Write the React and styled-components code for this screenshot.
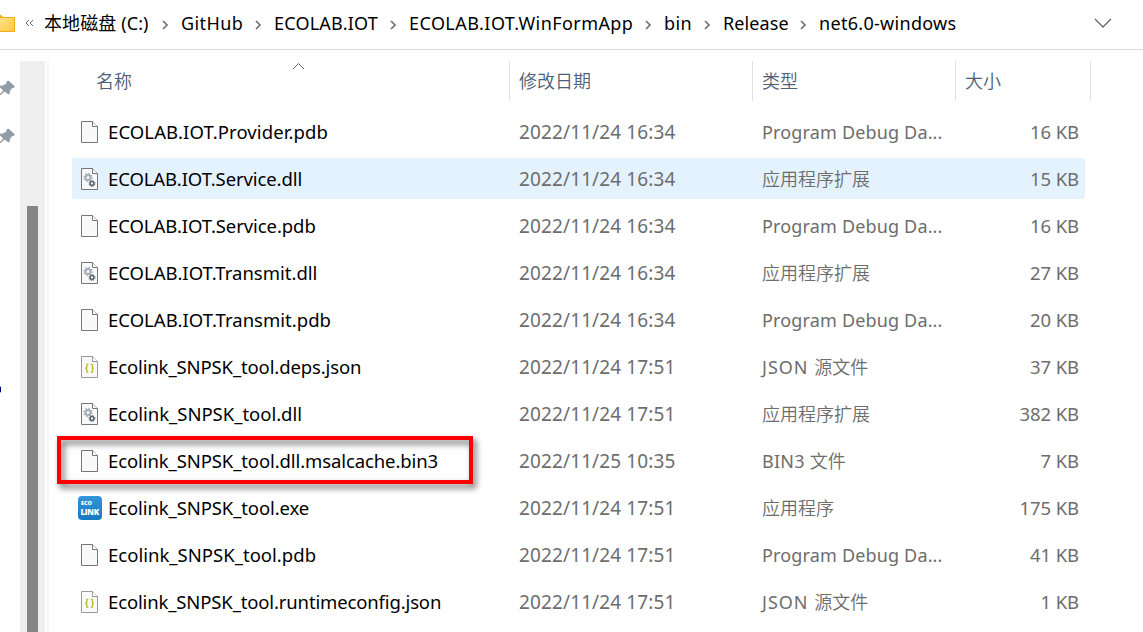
import React from "react";
import styled, { createGlobalStyle } from "styled-components";

const Global = createGlobalStyle`
  * { box-sizing: border-box; }
  body {
    margin: 0;
    background: #fff;
    color: #000;
    font-family: "Noto Sans", "Noto Sans CJK SC", sans-serif;
    font-size: 18px;
    overflow: hidden;
  }
`;

const Explorer = styled.div`
  display: flex;
  flex-direction: column;
  width: 1143px;
  height: 632px;
  overflow: hidden;
`;

const AddressBar = styled.header`
  display: flex;
  align-items: center;
  flex: none;
  height: 50px;
  padding: 0 31px 4px 0;
  border-bottom: 1px solid #d9d9d9;
`;

const FolderIcon = styled.svg`
  flex: none;
  margin-right: 10px;
`;

const Overflow = styled.svg`
  flex: none;
  margin-right: 10px;
`;

const Crumb = styled.span`
  flex: none;
  width: ${(p) => p.$w}px;
  white-space: nowrap;
  letter-spacing: ${(p) => p.$ls || 0}px;
  line-height: 26px;
`;

const CrumbArrow = styled.svg`
  flex: none;
  margin: 4px 12px 0 12px;
`;

const Expand = styled.svg`
  margin-left: auto;
`;

const Body = styled.div`
  display: flex;
  flex: 1;
  min-height: 0;
  padding-top: 11px;
`;

const NavPane = styled.aside`
  display: flex;
  flex-direction: column;
  flex: none;
  width: 20px;
  padding-top: 19px;
  gap: 32px;
`;

const NavLabelEnd = styled.i`
  width: 1px;
  height: 5px;
  margin-top: 211px;
  background: #00007a;
  box-shadow: 0 -1px 0 #8ecbff, 0 1px 0 #8ecbff;
`;

const ScrollTrack = styled.div`
  flex: none;
  width: 25px;
  padding: 145px 7px 0;
  background: #efefef;
`;

const ScrollThumb = styled.div`
  height: 100%;
  background: #858585;
`;

const PaneEdge = styled.div`
  flex: none;
  width: 4px;
  border-right: 2px solid #f5f5f5;
`;

const FileList = styled.main`
  flex: 1;
  padding-left: 23px;
`;

const HeaderRow = styled.div`
  display: grid;
  grid-template-columns: 438px 243px 203px 135px;
  height: 40px;
  margin-bottom: 10px;
`;

const HeaderCell = styled.div`
  position: relative;
  height: 40px;
  padding-left: ${(p) => p.$pad || 9}px;
  border-right: 1px solid #e2e2e2;
  color: #4c607a;
  font-weight: 350;
  line-height: 41px;
`;

const SortMark = styled.svg`
  position: absolute;
  left: 220px;
  top: 1px;
`;

const Rows = styled.div`
  display: flex;
  flex-direction: column;
  gap: 6px;
`;

const Row = styled.div`
  position: relative;
  display: grid;
  grid-template-columns: 437px 243px 203px 130px;
  width: 1013px;
  height: 41px;
  border-radius: 2px;
  line-height: 42px;
  background: ${(p) => (p.$hover ? "#e4f2fe" : "transparent")};
`;

const NameCell = styled.div`
  display: flex;
  align-items: center;
  height: 41px;
  padding-left: 5px;
  gap: 5px;
  white-space: nowrap;
  font-size: 18.5px;
  letter-spacing: ${(p) => p.$ls || 0}px;
`;

const Cell = styled.div`
  height: 41px;
  padding-left: 10px;
  color: #6d6d6d;
  white-space: nowrap;
  letter-spacing: ${(p) => p.$ls || 0}px;
`;

const DateCell = styled(Cell)`
  font-size: 19px;
`;

const TypeCell = styled(Cell)`
  line-height: 43px;
`;

const Han = styled.span`
  font-weight: 350;
  letter-spacing: 0;
`;

const SizeCell = styled(Cell)`
  padding: 0 6px 0 0;
  font-size: 18.5px;
  text-align: right;
`;

const Label = styled.span`
  padding-top: 1px;
`;

const Highlight = styled.div`
  position: absolute;
  left: -15px;
  top: -4px;
  width: 416px;
  height: 48px;
  border: 4px solid #fe0000;
  filter: drop-shadow(3px 4px 3px rgba(0, 0, 0, 0.6));
`;

const IconSlot = styled.svg`
  flex: none;
`;

function Page({ light }) {
  const c = light ? "#999" : "#767676";
  return (
    <>
      <path d="M4.5 2.5H15.5L20.5 7.5V23.5H4.5Z" fill="#f9f9f9" stroke={c} />
      <path d="M15.5 2.5V7.5H20.5" fill="#fff" stroke={c} />
    </>
  );
}

function FileIcon({ kind }) {
  if (kind === "exe") {
    return (
      <IconSlot width="26" height="26" viewBox="0 0 26 26">
        <defs>
          <linearGradient id="app" x1="0" y1="0" x2="0" y2="1">
            <stop offset="0" stopColor="#3396d8" />
            <stop offset="1" stopColor="#1678c0" />
          </linearGradient>
        </defs>
        <rect x="1" y="1" width="24" height="24" rx="4" fill="url(#app)" />
        <text fill="#fff" fontFamily="Open Sans, sans-serif" fontWeight="800" letterSpacing="0">
          <tspan x="4" y="10.3" fontSize="5.5">ECO</tspan>
          <tspan x="3.5" y="19.7" fontSize="8" letterSpacing="-0.3">LINK</tspan>
        </text>
      </IconSlot>
    );
  }
  return (
    <IconSlot width="26" height="26" viewBox="0 0 26 26">
      <Page light={kind === "json"} />
      {kind === "dll" && (
        <g fill="none">
          <circle cx="11" cy="11.5" r="2.5" stroke="#a3adb8" strokeWidth="2" />
          <circle cx="11" cy="11.5" r="4" stroke="#a3adb8" strokeWidth="1.4" strokeDasharray="1.5 1.64" />
          <circle cx="15" cy="17.5" r="1.9" stroke="#5c6672" strokeWidth="1.5" />
          <circle cx="15" cy="17.5" r="3" stroke="#5c6672" strokeWidth="1" strokeDasharray="1.2 1.16" />
        </g>
      )}
      {kind === "json" && (
        <g fill="none" stroke="#c0bd35" strokeWidth="1.4">
          <path d="M11.3 10.2H10.6Q9.8 10.2 9.8 11V13Q9.8 14 8.4 14.2Q9.8 14.4 9.8 15.4V17.4Q9.8 18.2 10.6 18.2H11.3" />
          <path d="M13.9 10.2H14.6Q15.4 10.2 15.4 11V13Q15.4 14 16.8 14.2Q15.4 14.4 15.4 15.4V17.4Q15.4 18.2 14.6 18.2H13.9" />
        </g>
      )}
    </IconSlot>
  );
}

function Pin() {
  return (
    <svg width="16" height="16" viewBox="0 0 16 16">
      <path d="M8.3 0.5L14.8 6.2L13.6 8L11.5 8.5L9.8 11.6L9.7 14L8 14.2L4.7 11.4L0 15.6V14L3.2 10.2L0 7.6V5.8L3 5.4L6.2 3.6L6.8 1.2Z" fill="#929da6" />
    </svg>
  );
}

const crumbs = [
  { text: "本地磁盘 (C:)", w: 106, ls: 0.1 },
  { text: "GitHub", w: 62, ls: 0.4 },
  { text: "ECOLAB.IOT", w: 104, ls: 0.2 },
  { text: "ECOLAB.IOT.WinFormApp", w: 224, ls: 0.43 },
  { text: "bin", w: 28, ls: 0.4 },
  { text: "Release", w: 65, ls: 0.1 },
  { text: "net6.0-windows", w: 138, ls: 0.3 },
];

const PDB = { latin: "Program Debug Da...", ls: 0.16 };
const DLL = { han: "应用程序扩展" };
const EXE = { han: "应用程序" };
const JSON_FILE = { latin: "JSON ", han: "源文件", ls: 1 };
const BIN = { latin: "BIN3 ", han: "文件", ls: 0.25 };

const files = [
  { name: "ECOLAB.IOT.Provider.pdb", ls: 0.1, date: "2022/11/24 16:34", type: PDB, size: "16 KB", kind: "page" },
  { name: "ECOLAB.IOT.Service.dll", ls: -0.1, date: "2022/11/24 16:34", type: DLL, size: "15 KB", kind: "dll", hover: true },
  { name: "ECOLAB.IOT.Service.pdb", ls: -0.08, date: "2022/11/24 16:34", type: PDB, size: "16 KB", kind: "page" },
  { name: "ECOLAB.IOT.Transmit.dll", ls: 0, date: "2022/11/24 16:34", type: DLL, size: "27 KB", kind: "dll" },
  { name: "ECOLAB.IOT.Transmit.pdb", ls: 0.02, date: "2022/11/24 16:34", type: PDB, size: "20 KB", kind: "page" },
  { name: "Ecolink_SNPSK_tool.deps.json", ls: -0.12, date: "2022/11/24 17:51", type: JSON_FILE, size: "37 KB", kind: "json" },
  { name: "Ecolink_SNPSK_tool.dll", ls: -0.02, date: "2022/11/24 17:51", type: DLL, size: "382 KB", kind: "dll" },
  { name: "Ecolink_SNPSK_tool.dll.msalcache.bin3", ls: -0.1, date: "2022/11/25 10:35", type: BIN, size: "7 KB", kind: "page", marked: true },
  { name: "Ecolink_SNPSK_tool.exe", ls: -0.1, date: "2022/11/24 17:51", type: EXE, size: "175 KB", kind: "exe" },
  { name: "Ecolink_SNPSK_tool.pdb", ls: 0.02, date: "2022/11/24 17:51", type: PDB, size: "41 KB", kind: "page" },
  { name: "Ecolink_SNPSK_tool.runtimeconfig.json", ls: -0.14, date: "2022/11/24 17:51", type: JSON_FILE, size: "1 KB", kind: "json" },
];

export default function App() {
  return (
    <Explorer>
      <Global />
      <AddressBar>
        <FolderIcon width="15" height="18" viewBox="0 0 15 18">
          <defs>
            <linearGradient id="folder" x1="0" y1="0" x2="1" y2="1">
              <stop offset="0" stopColor="#ffe08a" />
              <stop offset="1" stopColor="#fdc93f" />
            </linearGradient>
          </defs>
          <path d="M0 1H1L3 3H15V18H0Z" fill="#f0ae1f" />
          <path d="M0 4H14V17H0Z" fill="url(#folder)" />
        </FolderIcon>
        <Overflow width="9" height="8" viewBox="0 0 9 8" fill="none" stroke="#666">
          <path d="M4 1L1 4L4 7M8 1L5 4L8 7" />
        </Overflow>
        {crumbs.map((c, i) => (
          <React.Fragment key={c.text}>
            {i > 0 && (
              <CrumbArrow width="7" height="10" viewBox="0 0 7 10" fill="none" stroke="#707070" strokeWidth="1.7">
                <path d="M1 1L5 5L1 9" />
              </CrumbArrow>
            )}
            <Crumb $w={c.w} $ls={c.ls}>{c.text}</Crumb>
          </React.Fragment>
        ))}
        <Expand width="18" height="10" viewBox="0 0 18 10" fill="none" stroke="#666" strokeWidth="1.3">
          <path d="M1 1L9 9L17 1" />
        </Expand>
      </AddressBar>
      <Body>
        <NavPane>
          <Pin />
          <Pin />
          <NavLabelEnd />
        </NavPane>
        <ScrollTrack>
          <ScrollThumb />
        </ScrollTrack>
        <PaneEdge />
        <FileList>
          <HeaderRow>
            <HeaderCell $pad={24}>
              名称
              <SortMark width="13" height="8" viewBox="0 0 13 8" fill="none" stroke="#666">
                <path d="M1 7L6.5 1.5L12 7" />
              </SortMark>
            </HeaderCell>
            <HeaderCell>修改日期</HeaderCell>
            <HeaderCell>类型</HeaderCell>
            <HeaderCell>大小</HeaderCell>
          </HeaderRow>
          <Rows>
            {files.map((f) => (
              <Row key={f.name} $hover={f.hover}>
                <NameCell $ls={f.ls}>
                  <FileIcon kind={f.kind} />
                  <Label>{f.name}</Label>
                </NameCell>
                <DateCell $ls={0.12}>{f.date}</DateCell>
                <TypeCell $ls={f.type.ls}>
                  {f.type.latin}
                  {f.type.han && <Han>{f.type.han}</Han>}
                </TypeCell>
                <SizeCell $ls={-0.1}>{f.size}</SizeCell>
                {f.marked && <Highlight />}
              </Row>
            ))}
          </Rows>
        </FileList>
      </Body>
    </Explorer>
  );
}
